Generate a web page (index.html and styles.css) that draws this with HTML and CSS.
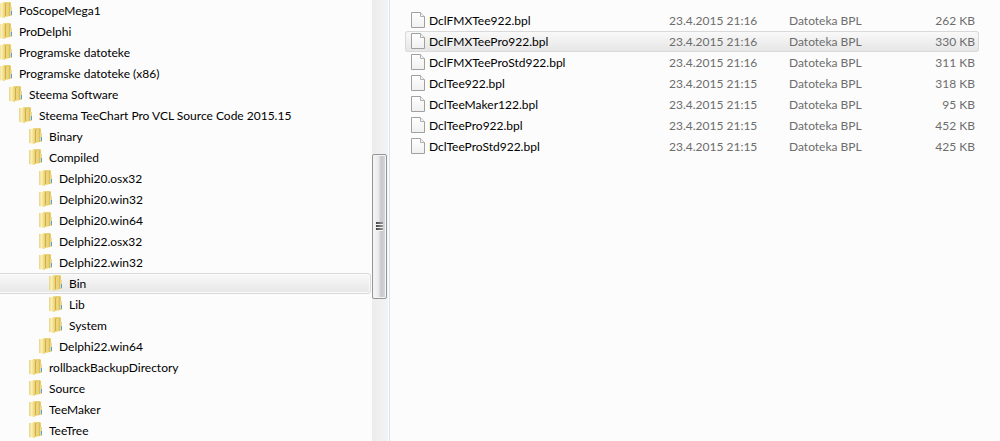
FILE: index.html
```html
<!DOCTYPE html>
<html lang="sl">
<head>
    <meta charset="UTF-8">
    <meta name="viewport" content="width=device-width, initial-scale=1.0">
    <title>Bin</title>
    <link rel="stylesheet" href="styles.css">
</head>
<body>
    <svg class="defs" width="0" height="0" aria-hidden="true">
        <defs>
            <linearGradient id="back" x1="0" x2="1">
                <stop offset="0" stop-color="#f0dc84"/>
                <stop offset="1" stop-color="#e6cc68"/>
            </linearGradient>
            <linearGradient id="front" x1="0" x2="1">
                <stop offset="0" stop-color="#e8d388"/>
                <stop offset=".4" stop-color="#fbf0b4"/>
                <stop offset="1" stop-color="#ead070"/>
            </linearGradient>
            <linearGradient id="paper" x2="0" y2="1">
                <stop offset="0" stop-color="#ffffff"/>
                <stop offset="1" stop-color="#f0f0f0"/>
            </linearGradient>
            <symbol id="folder" viewBox="0 0 14 16">
                <path d="M4 0h7l1 1v12l-1 1-5 1z" fill="url(#back)"/>
                <path d="M10 1h1v13h-1z" fill="#dcbe5c"/>
                <path d="M11 5h2v9h-2z" fill="#ecd890"/>
                <path d="M12 9h1v4h-1z" fill="#4aa4ea"/>
                <path d="M5 2 8 1v12l-3 2z" fill="#d0ad48"/>
                <path d="M0 1h4l2 1v14l-6-1z" fill="url(#front)"/>
                <path d="M7 2 9 1v12l-2 2z" fill="#ecd47c"/>
            </symbol>
            <symbol id="file" viewBox="0 0 14 16">
                <path d="M.5.5h9l4 4v11H.5z" fill="url(#paper)" stroke="#a0a0a0"/>
                <path d="M9.500.5v4h4" fill="#f4f4f4" stroke="#b0b0b0"/>
            </symbol>
        </defs>
    </svg>

    <div class="explorer">
        <nav class="side">
            <ul class="tree">
                <li><button class="level0"><svg class="folder"><use href="#folder"/></svg>PoScopeMega1</button></li>
                <li><button class="level0"><svg class="folder"><use href="#folder"/></svg>ProDelphi</button></li>
                <li><button class="level0"><svg class="folder"><use href="#folder"/></svg>Programske datoteke</button></li>
                <li><button class="level0"><svg class="folder"><use href="#folder"/></svg>Programske datoteke (x86)</button></li>
                <li><button class="level1"><svg class="folder"><use href="#folder"/></svg>Steema Software</button></li>
                <li><button class="level2"><svg class="folder"><use href="#folder"/></svg>Steema TeeChart Pro VCL Source Code 2015.15</button></li>
                <li><button class="level3"><svg class="folder"><use href="#folder"/></svg>Binary</button></li>
                <li><button class="level3"><svg class="folder"><use href="#folder"/></svg>Compiled</button></li>
                <li><button class="level4"><svg class="folder"><use href="#folder"/></svg>Delphi20.osx32</button></li>
                <li><button class="level4"><svg class="folder"><use href="#folder"/></svg>Delphi20.win32</button></li>
                <li><button class="level4"><svg class="folder"><use href="#folder"/></svg>Delphi20.win64</button></li>
                <li><button class="level4"><svg class="folder"><use href="#folder"/></svg>Delphi22.osx32</button></li>
                <li><button class="level4"><svg class="folder"><use href="#folder"/></svg>Delphi22.win32</button></li>
                <li><button class="level5 selected"><svg class="folder"><use href="#folder"/></svg>Bin</button></li>
                <li><button class="level5"><svg class="folder"><use href="#folder"/></svg>Lib</button></li>
                <li><button class="level5"><svg class="folder"><use href="#folder"/></svg>System</button></li>
                <li><button class="level4"><svg class="folder"><use href="#folder"/></svg>Delphi22.win64</button></li>
                <li><button class="level3"><svg class="folder"><use href="#folder"/></svg>rollbackBackupDirectory</button></li>
                <li><button class="level3"><svg class="folder"><use href="#folder"/></svg>Source</button></li>
                <li><button class="level3"><svg class="folder"><use href="#folder"/></svg>TeeMaker</button></li>
                <li><button class="level3"><svg class="folder"><use href="#folder"/></svg>TeeTree</button></li>
            </ul>
            <div class="scrollbar">
                <div class="thumb"><span></span><span></span><span></span></div>
            </div>
        </nav>

        <main class="content">
            <table class="files">
                <tbody>
                    <tr>
                        <td class="name"><div><svg class="file"><use href="#file"/></svg>DclFMXTee922.bpl</div></td>
                        <td class="date">23.4.2015 21:16</td>
                        <td class="type">Datoteka BPL</td>
                        <td class="size">262 KB</td>
                    </tr>
                    <tr class="active">
                        <td class="name"><div><svg class="file"><use href="#file"/></svg>DclFMXTeePro922.bpl</div></td>
                        <td class="date">23.4.2015 21:16</td>
                        <td class="type">Datoteka BPL</td>
                        <td class="size">330 KB</td>
                    </tr>
                    <tr>
                        <td class="name"><div><svg class="file"><use href="#file"/></svg>DclFMXTeeProStd922.bpl</div></td>
                        <td class="date">23.4.2015 21:16</td>
                        <td class="type">Datoteka BPL</td>
                        <td class="size">311 KB</td>
                    </tr>
                    <tr>
                        <td class="name"><div><svg class="file"><use href="#file"/></svg>DclTee922.bpl</div></td>
                        <td class="date">23.4.2015 21:15</td>
                        <td class="type">Datoteka BPL</td>
                        <td class="size">318 KB</td>
                    </tr>
                    <tr>
                        <td class="name"><div><svg class="file"><use href="#file"/></svg>DclTeeMaker122.bpl</div></td>
                        <td class="date">23.4.2015 21:15</td>
                        <td class="type">Datoteka BPL</td>
                        <td class="size">95 KB</td>
                    </tr>
                    <tr>
                        <td class="name"><div><svg class="file"><use href="#file"/></svg>DclTeePro922.bpl</div></td>
                        <td class="date">23.4.2015 21:15</td>
                        <td class="type">Datoteka BPL</td>
                        <td class="size">452 KB</td>
                    </tr>
                    <tr>
                        <td class="name"><div><svg class="file"><use href="#file"/></svg>DclTeeProStd922.bpl</div></td>
                        <td class="date">23.4.2015 21:15</td>
                        <td class="type">Datoteka BPL</td>
                        <td class="size">425 KB</td>
                    </tr>
                </tbody>
            </table>
        </main>
    </div>
</body>
</html>
```

FILE: styles.css
```css
*{box-sizing: border-box;}

body{margin: 0; background: #fcfcfc; color: #000; font: 12px/19px Lato, "Open Sans", sans-serif;}

.defs{display: block;}

.explorer{display: grid; grid-template-columns: 39% 1fr; min-height: 100vh;}

/* folder tree */
.side{display: flex; gap: 1px; padding-right: 1px; border-right: 1px solid #d6e5f5; overflow: hidden;}

.tree{flex: 1; list-style: none; margin: 0 0 0 -4px; padding: 0;}

.tree button{display: flex; align-items: center; gap: 6px; width: 100%; height: 21px; padding: 0; border: 1px solid transparent; border-radius: 3px; background: none; color: inherit; font: inherit; white-space: nowrap;}

.tree .level0{padding-left: 2px;}
.tree .level1{padding-left: 12px;}
.tree .level2{padding-left: 22px;}
.tree .level3{padding-left: 32px;}
.tree .level4{padding-left: 42px;}
.tree .level5{padding-left: 52px;}

.tree .selected{border-color: #d9d9d9; background: linear-gradient(#f9f9f9, #e6e6e6); box-shadow: inset 0 0 0 1px #fafafa;}

.folder, .file{flex: none; width: 14px; height: 16px; margin-bottom: 1px;}

/* scrollbar */
.scrollbar{display: flex; flex-direction: column; width: 16px; background: linear-gradient(to right, #ececec, #f3f3f3);}

.scrollbar::before{content: ""; flex: 155;}

.scrollbar::after{content: ""; flex: 143;}

.thumb{flex: 143; display: flex; flex-direction: column; align-items: center; justify-content: center; width: 15px; border: 1px solid #959595; border-radius: 2px; background: linear-gradient(to right, #f6f6f6 0%, #e9e9eb 45%, #cfcfd4 55%, #c8c8cd 70%, #dedee1 100%); box-shadow: inset 0 0 0 1px #f4f4f4;}

.thumb span{width: 7px; height: 3px; border-bottom: 1px solid #f4f4f4; background: linear-gradient(to right, #444, #999);}

/* file list */
.content{padding: 10px 21px 0 15px;}

.files{width: 100%; table-layout: fixed; border-collapse: separate; border-spacing: 0;}

.files td{height: 21px; padding: 0; border: 1px solid transparent; border-width: 1px 0; color: #6d6d6d; white-space: nowrap;}

.files .name{padding-left: 6px; color: #000;}

.name div{display: flex; align-items: center; gap: 4px;}

.files .date{width: 120px;}

.files .type{width: 120px;}

.files .size{width: 70px; padding-right: 4px; text-align: right;}

.active td{border-color: #d9d9d9; background: linear-gradient(#f9f9f9, #e6e6e6);}

.files .active .name{border-left: 1px solid #d9d9d9; border-radius: 3px 0 0 3px; padding-left: 5px;}

.files .active .size{border-right: 1px solid #d9d9d9; border-radius: 0 3px 3px 0; padding-right: 3px;}
```
